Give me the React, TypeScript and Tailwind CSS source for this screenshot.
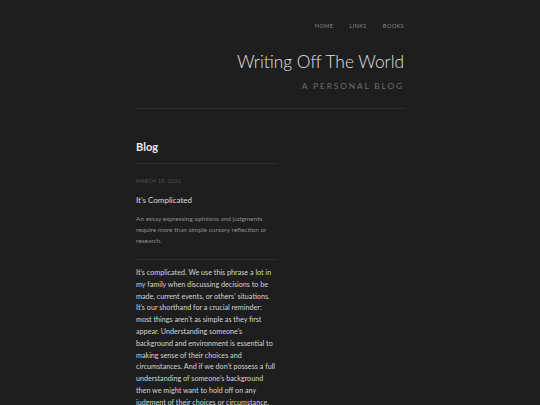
export default function App() {
  const font = { fontFamily: "Lato, 'Noto Sans', sans-serif" };
  return (
    <div className="min-h-[405px] w-full bg-[#1e1e1e]" style={font}>
      <div className="mx-auto w-[268px] pt-[22px]">
        <nav className="flex justify-end gap-[16px] text-[5.5px] tracking-[0.08em] text-[#8a8a8a] leading-[8px]">
          <span>HOME</span>
          <span>LINKS</span>
          <span>BOOKS</span>
        </nav>
        <header className="mt-[21px] flex flex-col items-end">
          <h1 className="text-[17.3px] leading-[22px] font-light text-[#e0e0e0]">Writing Off The World</h1>
          <p className="mt-[7px] text-[8.4px] leading-[12px] tracking-[0.22em] text-[#6f6f6f]">A PERSONAL BLOG</p>
        </header>
        <div className="mt-[16px] h-px bg-[#313131]" />
        <main className="w-[140px] pt-[31px]">
          <h2 className="text-[11px] leading-[14px] font-bold text-[#ececec]">Blog</h2>
          <div className="mt-[9px] h-px bg-[#313131]" />
          <p className="mt-[14px] text-[5px] leading-[7px] tracking-[0.08em] text-[#555]">MARCH 19, 2026</p>
          <h3 className="mt-[10px] text-[8px] leading-[10px] text-[#dcdcdc]">It’s Complicated</h3>
          <p className="mt-[8px] text-[6.5px] leading-[11px] text-[#8e8e8e]">
            An essay expressing opinions and judgments require more than simple cursory reflection or research.
          </p>
          <div className="mt-[13px] h-px bg-[#313131]" />
          <p className="mt-[7px] text-[7.2px] leading-[11.8px] text-[#d4d4d4]">
            It’s complicated. We use this phrase a lot in my family when discussing decisions to be made, current events, or others’ situations. It’s our shorthand for a crucial reminder: most things aren’t as simple as they first appear. Understanding someone’s background and environment is essential to making sense of their choices and circumstances. And if we don’t possess a full understanding of someone’s background then we might want to hold off on any judgment of their choices or circumstance.
          </p>
        </main>
      </div>
    </div>
  );
}
